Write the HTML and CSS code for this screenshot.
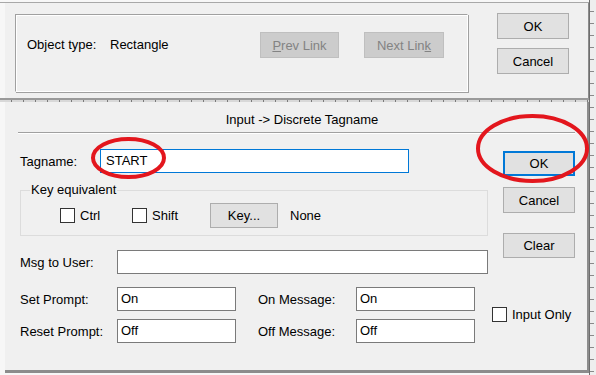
FILE: index.html
```html
<!DOCTYPE html>
<html lang="en">
  <head>
    <meta charset="UTF-8" />
    <title>Input -> Discrete Tagname</title>
    <link rel="stylesheet" href="styles.css">
  </head>
  <body>
    <div class="screen">
      <div class="main">
        <!-- object info dialog -->
        <section class="pane top">
          <div class="groupbox objinfo">
            <span class="objlabel">Object type:</span>
            <span class="objval">Rectangle</span>
            <button class="btn off prev"><u>P</u>rev Link</button>
            <button class="btn off next">Next Lin<u>k</u></button>
          </div>
          <div class="btncol topbtns">
            <button class="btn">OK</button>
            <button class="btn">Cancel</button>
          </div>
        </section>

        <div class="hsep"></div>

        <!-- tagname dialog -->
        <section class="pane dialog">
          <div class="title">Input -&gt; Discrete Tagname</div>
          <div class="rule"></div>
          <div class="body">
            <div class="form">
              <div class="row tagrow">
                <label class="lbl tag">Tagname:</label>
                <div class="field focus wide">START</div>
              </div>
              <fieldset class="keybox">
                <legend>Key equivalent</legend>
                <div class="keyrow">
                  <span class="check ctrl"><span class="box"></span>Ctrl</span>
                  <span class="check shift"><span class="box"></span>Shift</span>
                  <button class="btn key">Key...</button>
                  <span class="none">None</span>
                </div>
              </fieldset>
              <div class="row msgrow">
                <label class="lbl">Msg to User:</label>
                <div class="field msg"></div>
              </div>
              <div class="row setrow">
                <label class="lbl">Set Prompt:</label>
                <div class="field small">On</div>
                <label class="lbl mid">On Message:</label>
                <div class="field small">On</div>
              </div>
              <div class="row resetrow">
                <label class="lbl">Reset Prompt:</label>
                <div class="field small">Off</div>
                <label class="lbl mid">Off Message:</label>
                <div class="field small">Off</div>
              </div>
            </div>
            <div class="side">
              <button class="btn default">OK</button>
              <button class="btn cancel">Cancel</button>
              <button class="btn clear">Clear</button>
              <span class="check inonly"><span class="box"></span>Input Only</span>
            </div>
          </div>
        </section>
      </div>
      <div class="ruler"></div>

      <!-- red annotation marks drawn over the dialog -->
      <svg class="marks" width="596" height="375" viewBox="0 0 596 375">
        <ellipse cx="128.5" cy="158" rx="35.5" ry="19" />
        <ellipse cx="532.5" cy="148.5" rx="54.5" ry="32.5" />
      </svg>
    </div>
  </body>
</html>
```

FILE: styles.css
```css
body {
  margin: 0;
  background: #f7f7f7;
  font-family: "Liberation Sans", Arial, sans-serif;
  font-size: 13px;
  color: #000;
}
.screen {
  position: relative;
  display: flex;
  width: 596px;
  height: 375px;
  overflow: hidden;
}
.main {
  width: 589px;
  margin-top: 2px;
  border-top: 1px solid #a8a8a8;
}
.pane {
  box-sizing: border-box;
  margin-left: 5px;
  background: #f0f0f0;
}
.top {
  display: flex;
  height: 95px;
  padding: 10px 0 0 10px;
  border-right: 1px solid #8c8c8c;
}
.groupbox {
  box-sizing: border-box;
  border-top: 1px solid #a0a0a0;
  border-left: 1px solid #a0a0a0;
  border-right: 1px solid #fff;
  border-bottom: 1px solid #fff;
  box-shadow: inset 1px 1px 0 #fff, 1px 1px 0 #a0a0a0;
}
.objinfo {
  display: flex;
  align-items: flex-start;
  width: 453px;
  height: 78px;
  margin-top: 1px;
  padding: 17px 0 0 11px;
}
.objlabel {
  width: 83px;
  line-height: 26px;
}
.objval {
  width: 150px;
  line-height: 26px;
}
.btn {
  box-sizing: border-box;
  height: 26px;
  padding: 0;
  border: 1px solid #adadad;
  background: #e1e1e1;
  font-family: inherit;
  font-size: 13px;
  color: #000;
}
.btn.off {
  background: #cccccc;
  border-color: #bfbfbf;
  color: #838383;
}
.prev {
  width: 79px;
}
.next {
  width: 80px;
  margin-left: 25px;
}
.btncol {
  display: flex;
  flex-direction: column;
}
.topbtns {
  margin-left: 29px;
  gap: 9px;
}
.topbtns .btn {
  width: 72px;
}
.hsep {
  height: 4px;
  background:
    linear-gradient(#9a9a9a, #9a9a9a) top / 100% 2px no-repeat,
    repeating-linear-gradient(90deg, transparent 0 11px, #7a7a7a 11px 12px) bottom / 100% 2px no-repeat;
  background-color: #d8d8d8;
}
.dialog {
  height: 271px;
  padding: 10px 0 0 13px;
  border-right: 2px solid #8c8c8c;
  border-bottom: 3px solid #8c8c8c;
}
.title {
  width: 557px;
  padding-left: 11px;
  box-sizing: border-box;
  text-align: center;
  line-height: 16px;
}
.rule {
  width: 557px;
  height: 1px;
  margin-top: 4px;
  background: #a0a0a0;
  border-bottom: 1px solid #fff;
}
.body {
  display: flex;
}
.form {
  width: 470px;
  padding-left: 2px;
}
.row {
  display: flex;
  align-items: center;
}
.tagrow {
  margin-top: 15px;
}
.msgrow {
  margin-top: 14px;
}
.setrow {
  margin-top: 13px;
}
.resetrow {
  margin-top: 8px;
}
.lbl {
  width: 97px;
}
.lbl.tag {
  width: 80px;
}
.lbl.mid {
  width: 98px;
  margin-left: 22px;
}
.field {
  box-sizing: border-box;
  height: 24px;
  padding: 0 4px;
  border: 1px solid #7a7a7a;
  background: #fff;
  line-height: 22px;
}
.field.focus {
  border-color: #0078d7;
  padding-left: 5px;
}
.wide {
  width: 309px;
}
.msg {
  width: 371px;
}
.small {
  width: 119px;
  padding-left: 3px;
}
.keybox {
  box-sizing: border-box;
  width: 468px;
  margin: 10px 0 0;
  padding: 6px 0 7px 0;
  border: 1px solid #dcdcdc;
  min-inline-size: 0;
}
.keybox legend {
  margin-left: 9px;
  padding: 0 1px;
  line-height: 14px;
}
.keyrow {
  display: flex;
  align-items: center;
  padding-left: 39px;
}
.check {
  display: inline-flex;
  align-items: center;
  gap: 5px;
}
.box {
  box-sizing: border-box;
  width: 15px;
  height: 15px;
  border: 1px solid #333;
  background: #fff;
}
.ctrl {
  width: 72px;
}
.shift {
  width: 78px;
}
.key {
  width: 68px;
  height: 25px;
}
.none {
  margin-left: 12px;
}
.side {
  display: flex;
  flex-direction: column;
  padding-left: 13px;
}
.side .btn {
  width: 72px;
}
.default {
  margin-top: 17px;
  height: 25px;
  border: 2px solid #0078d7;
}
.cancel {
  margin-top: 11px;
}
.clear {
  margin-top: 20px;
  height: 25px;
}
.inonly {
  margin: 49px 0 0 -11px;
}
.ruler {
  flex: 1;
  background:
    repeating-linear-gradient(180deg, transparent 0 11px, #8a8a8a 11px 12px) left / 4px 100% no-repeat;
  background-color: #eeeeee;
  border-left: 1px solid #6e6e6e;
}
.marks {
  position: absolute;
  left: 0;
  top: 0;
  pointer-events: none;
}
.marks ellipse {
  fill: none;
  stroke: #e3161d;
  stroke-width: 4;
}
```
